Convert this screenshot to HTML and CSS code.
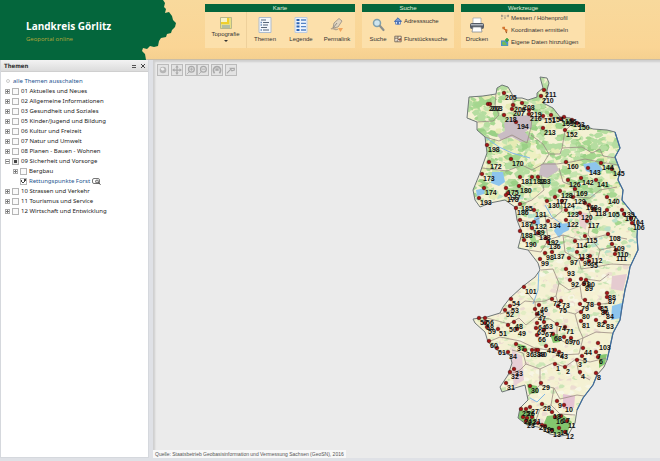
FILE: index.html
```html
<!DOCTYPE html>
<html lang="de">
<head>
    <meta charset="utf-8">
    <title>Landkreis Görlitz - Geoportal online</title>
    <link rel="stylesheet" href="styles.css">
</head>
<body>
    <header class="header">
        <svg class="header-shape" viewBox="0 0 180 60" aria-hidden="true">
            <path fill="#04663c" d="M0 0H163L165 3 164 7 166 9 165 13 169 12 172 16 173 20 176 23 175 27 172 30 171 33 167 34 166 37 161 38 159 41 158 46 154 47 150 46 147 49 143 48 142 51 145 54 146 60H0Z"/>
        </svg>
        <div class="brand">
            <h1>Landkreis Görlitz</h1>
            <p>Geoportal online</p>
        </div>
        <div class="ribbon">
            <section class="group group-karte">
                <h2>Karte</h2>
                <div class="group-body">
                    <button class="tool tool-menu">
                        <svg class="icon" viewBox="0 0 14 14"><path fill="#e7df83" stroke="#b9b78a" d="M1.5 1.5h11v11h-11z"/><path fill="#f7f3c8" d="M2 2h6v5H2z"/><path stroke="#f0cf2d" stroke-width="2" fill="none" d="M9 2v5H2"/><path fill="#b4bda3" d="M3 9h8v3H3z"/></svg>
                        <span>Topografie</span>
                        <i class="arrow"></i>
                    </button>
                    <button class="tool">
                        <svg class="icon" viewBox="0 0 16 16"><path fill="#f5f8fc" stroke="#aebccd" d="M2 .5h12v15H2z"/><path stroke="#59677a" stroke-width="1.2" d="M4 3h5M6 5.5h6M6 8h5M4 10.5h6M6 13h6"/><path stroke="#7090bd" stroke-width="1.5" d="M3.5 5.5h1.5M3.5 8h1.5M3.5 13h1.5"/></svg>
                        <span>Themen</span>
                    </button>
                    <button class="tool">
                        <svg class="icon" viewBox="0 0 16 16"><path fill="#eef4fc" stroke="#bdcce0" d="M2 .5h12v15H2z"/><path fill="#2c62b2" d="M3.500 2h3v2h-3zM3.500 5.300h3v2h-3zM3.500 8.600h3v2h-3zM3.500 12h3v2h-3z"/><path stroke="#5683c4" stroke-width="1.300" d="M8 3h5M8 6.300h5M8 9.600h5M8 13h5"/></svg>
                        <span>Legende</span>
                    </button>
                    <button class="tool">
                        <svg class="icon" viewBox="0 0 16 16"><path fill="#e1d5c0" stroke="#a69b8d" d="M4 11 5 6 10 1.500 13 4 9 10Z"/><path fill="none" stroke="#8f8c87" d="M4 11 8 6"/><path fill="none" stroke="#b6a48d" stroke-width="1.500" d="M2 12c3-2 4 2 7 0"/><path fill="#f2a45d" d="M9 11h5l-2.500 4z"/></svg>
                        <span>Permalink</span>
                    </button>
                </div>
            </section>
            <section class="group group-suche">
                <h2>Suche</h2>
                <div class="group-body">
                    <button class="tool">
                        <svg class="icon" viewBox="0 0 16 16"><circle cx="7" cy="6" r="3.500" fill="#cfe5ee" stroke="#7fa0ad" stroke-width="1.500"/><path stroke="#8a8f8d" stroke-width="2.200" stroke-linecap="round" d="M10 9l3.500 4"/></svg>
                        <span>Suche</span>
                    </button>
                    <div class="rows">
                        <button class="row-tool">
                            <svg class="small-icon" viewBox="0 0 10 10"><path fill="#e7eefb" stroke="#456fb7" d="M2 5v4h6V5"/><path fill="#7c9fd8" stroke="#315ca8" d="M.5 5.500 5 1l4.500 4.500z"/><path fill="#315ca8" d="M4 6h2v3H4z"/></svg>
                            Adresssuche
                        </button>
                        <button class="row-tool">
                            <svg class="small-icon" viewBox="0 0 10 10"><path fill="#f6eee0" stroke="#66584e" d="M1 1.500h8v7H1zM1 4h4V1.500M5 4v2l4-2M4 8.500V6"/><path fill="#a4543c" d="M6 5h3v2H6z"/></svg>
                            Flurstückssuche
                        </button>
                    </div>
                </div>
            </section>
            <section class="group group-werkzeuge">
                <h2>Werkzeuge</h2>
                <div class="group-body">
                    <button class="tool">
                        <svg class="icon" viewBox="0 0 16 16"><path fill="#fff" stroke="#9aa0a8" stroke-width=".7" d="M4 1h8v6H4z"/><rect x="1" y="6" width="14" height="6" rx="2" fill="#545b66"/><path fill="#aeb5be" d="M2 7h12v1.500H2z"/><path fill="#fff" stroke="#777e88" stroke-width=".7" d="M4 10h8l1 5H3z"/></svg>
                        <span>Drucken</span>
                    </button>
                    <div class="rows">
                        <button class="row-tool">
                            <svg class="small-icon" viewBox="0 0 10 10"><path fill="none" stroke="#8f8b80" stroke-dasharray="2 1" d="M1 2.500h8M1 2v5M9 2v3"/><path fill="#a39985" d="M0 1h2v2H0zM8 1h2v2H8zM4 4h2v2H4z"/></svg>
                            Messen / Höhenprofil
                        </button>
                        <button class="row-tool">
                            <svg class="small-icon" viewBox="0 0 10 10"><path stroke="#9a5a31" stroke-width="1.500" fill="none" d="M2 2l4 3 1 4"/><path fill="#d8762f" d="M2 1h3v3H2zM5 4h3v3H5z"/></svg>
                            Koordinaten ermitteln
                        </button>
                        <button class="row-tool">
                            <svg class="small-icon" viewBox="0 0 10 10"><path fill="#4a91cf" d="M0 3h9v7H0z"/><path fill="#75ba59" d="M1 5l3-1 2 2 2 3H2z"/><path stroke="#3da447" stroke-width="2" d="M7.500 0v5M5 2.500h5"/></svg>
                            Eigene Daten hinzufügen
                        </button>
                    </div>
                </div>
            </section>
        </div>
    </header>

    <main class="content">
        <aside class="panel">
            <div class="panel-title">
                <h2>Themen</h2>
                <button class="panel-button" aria-label="Minimieren"><svg viewBox="0 0 6 6"><path stroke="#555" d="M1 2.500h4M1 4.500h4"/></svg></button>
                <button class="panel-button" aria-label="Schließen"><svg viewBox="0 0 6 6"><path stroke="#444" d="M1 1l4 4M5 1 1 5"/></svg></button>
            </div>
            <div class="all-off"><i class="bullet"></i><a href="#">alle Themen ausschalten</a></div>
            <ul class="tree">
                <li><button class="expand" aria-label="Aufklappen"></button><input type="checkbox" id="t01"><label for="t01">01 Aktuelles und Neues</label></li>
                <li><button class="expand" aria-label="Aufklappen"></button><input type="checkbox" id="t02"><label for="t02">02 Allgemeine Informationen</label></li>
                <li><button class="expand" aria-label="Aufklappen"></button><input type="checkbox" id="t03"><label for="t03">03 Gesundheit und Soziales</label></li>
                <li><button class="expand" aria-label="Aufklappen"></button><input type="checkbox" id="t05"><label for="t05">05 Kinder/Jugend und Bildung</label></li>
                <li><button class="expand" aria-label="Aufklappen"></button><input type="checkbox" id="t06"><label for="t06">06 Kultur und Freizeit</label></li>
                <li><button class="expand" aria-label="Aufklappen"></button><input type="checkbox" id="t07"><label for="t07">07 Natur und Umwelt</label></li>
                <li><button class="expand" aria-label="Aufklappen"></button><input type="checkbox" id="t08"><label for="t08">08 Planen - Bauen - Wohnen</label></li>
                <li>
                    <button class="expand open" aria-label="Zuklappen"></button><input type="checkbox" id="t09" class="partial"><label for="t09">09 Sicherheit und Vorsorge</label>
                    <ul>
                        <li><button class="expand" aria-label="Aufklappen"></button><input type="checkbox" id="t09a"><label for="t09a">Bergbau</label></li>
                        <li class="leaf"><input type="checkbox" id="t09b" checked><label for="t09b" class="active">Rettungspunkte Forst</label><svg class="zoom-icon" viewBox="0 0 9 7"><rect x=".5" y=".5" width="7" height="5" rx="1.500" fill="#fff" stroke="#777"/><circle cx="5" cy="3.500" r="1.500" fill="#ddd" stroke="#555" stroke-width=".8"/><path stroke="#333" d="M6 4.500l2.500 2"/></svg></li>
                    </ul>
                </li>
                <li><button class="expand" aria-label="Aufklappen"></button><input type="checkbox" id="t10"><label for="t10">10 Strassen und Verkehr</label></li>
                <li><button class="expand" aria-label="Aufklappen"></button><input type="checkbox" id="t11"><label for="t11">11 Tourismus und Service</label></li>
                <li><button class="expand" aria-label="Aufklappen"></button><input type="checkbox" id="t12"><label for="t12">12 Wirtschaft und Entwicklung</label></li>
            </ul>
        </aside>

        <section class="map-area">
            <div class="map-tools">
                <button aria-label="Gesamtansicht"><svg viewBox="0 0 12 12"><circle cx="6" cy="6" r="4" fill="#b5b5b5"/><path fill="#eee" d="M3 4l3-1 2 2-2 2-2-1z"/></svg></button>
                <button class="gap" aria-label="Verschieben"><svg viewBox="0 0 12 12"><path stroke="#aaa" stroke-width="1.500" d="M6 2v8M2 6h8"/><path fill="#aaa" d="M6 0l2 3H4zM6 12l2-3H4zM0 6l3-2v4zM12 6 9 4v4z"/></svg></button>
                <button aria-label="Vergrößern"><svg viewBox="0 0 12 12"><circle cx="6.500" cy="5" r="3.500" fill="#ddd" stroke="#aaa" stroke-width="1.500"/><path stroke="#aaa" d="M6.500 3v4M4.500 5h4M4 8l-3 3"/></svg></button>
                <button class="gap" aria-label="Verkleinern"><svg viewBox="0 0 12 12"><circle cx="6.500" cy="5" r="3.500" fill="#ddd" stroke="#aaa" stroke-width="1.500"/><path stroke="#aaa" d="M4.500 5h4M4 8l-3 3"/></svg></button>
                <button class="gap" aria-label="Zurück"><svg viewBox="0 0 12 12"><path fill="none" stroke="#aaa" stroke-width="2" d="M3 10C0 5 3 2 6 2s6 3 3 8"/><path fill="#aaa" d="M4 4h4v3H4z"/></svg></button>
                <button aria-label="Messen"><svg viewBox="0 0 12 12"><path fill="none" stroke="#aaa" stroke-width="1.300" d="M1 10l5-5M5 4h5v2L7 7z"/></svg></button>
            </div>
            <svg class="map" id="map" viewBox="460 70 180 375" role="img" aria-label="Karte Landkreis Görlitz">
                <defs>
                    <clipPath id="land-clip">
                        <path id="land" d="M469 97 483 96 496 94 497 88 502 85 508 87 512 94 513 98 522 98 528 100 537 97 537 93 543 88 540 77 547 78 549 83 547 90 547 97 543 103 553 108 560 117 570 118 582 125 593 129 607 130 615 132 620 148 615 157 620 170 618 180 623 190 622 200 630 210 638 220 637 237 638 250 630 267 628 278 625 290 622 307 620 320 613 333 610 347 607 360 604 367 597 375 593 385 583 398 577 410 575 423 568 435 560 436 550 434 538 427 527 425 518 418 520 408 528 400 525 385 515 388 502 392 500 387 508 375 512 363 510 355 497 350 488 342 485 332 475 323 473 319 487 317 500 313 503 307 510 298 522 287 535 277 540 270 538 263 528 250 518 248 522 233 517 220 515 207 505 200 490 203 480 207 475 200 473 190 480 173 482 167 487 153 485 137 477 130 477 122 467 118Z"/>
                    </clipPath>
                </defs>
                <g clip-path="url(#land-clip)">
                    <path fill="#f4f1d3" d="M460 70h180v375H460z"/>
                    <g id="terrain"></g>
                    <g fill="#c9bcc4">
                        <path d="M504 123 515 116 530 115 532 127 525 132 531 140 521 142 512 137 501 140 497 135 505 131z"/>
                        <path d="M541 164 555 163 559 170 547 178 539 175z"/>
                        <path fill="#e5cbd0" d="M612 276 627 274 623 291 611 289z"/>
                        <path fill="#e7cfd6" d="M512 350 522 356 524 380 514 386 512 370z"/>
                        <path fill="#e4c3d2" d="M563 394 575 396 574 408 563 409z"/>
                        <path fill="#ead0d0" d="M578 212 587 213 586 230 580 226z"/>
                    </g>
                    <g fill="#8ec5ed">
                        <path d="M492 172 503 172 505 182 499 186 491 183z"/>
                        <path d="M583 164 596 162 603 170 594 174 586 171z"/>
                        <path d="M557 224 570 223 569 230 563 233 559 238 554 231z"/>
                        <path d="M612 306 622 303 621 318 611 320z"/>
                        <path d="M476 190 485 188 484 194 477 196z"/>
                        <path d="M534 218l5-2 1 8-5 2z"/>
                    </g>
                    <g fill="#83c66e">
                        <path d="M519 410 533 411 536 424 527 425 518 418z"/>
                        <path d="M547 416 562 414 572 422 567 433 555 434 543 426z"/>
                        <path d="M527 384 537 386 538 393 529 394z"/>
                        <path d="M599 355 607 354 605 364 599 368z"/>
                        <path d="M516 343 526 346 528 352 520 350z"/>
                        <path d="M550 334 558 334 560 342 553 343z"/>
                    </g>
                    <g fill="none" stroke="#80b8e7" stroke-width="1">
                        <path d="M485 137 499 147 512 153 530 158"/>
                        <path d="M539 266 538 290 533 304"/>
                        <path d="M530 398 537 402 545 394"/>
                        <path d="M545 205 552 217 562 224"/>
                    </g>
                    <g class="district">
                        <path d="M496 94 495 105 499 115 493 121 477 122M513 98 513 106 529 110 532 118 543 119 560 117"/>
                        <path d="M485 137 499 141 512 135 527 143 531 127 532 118M531 135 543 144 549 154 560 154 562 148"/>
                        <path d="M562 148 565 131 574 122M562 148 582 147 592 153 600 149 603 156 616 158M549 154 543 164 532 170 522 165 507 171 482 168"/>
                        <path d="M543 164 557 164 571 162 585 159 600 162 618 165M541 175 544 190 532 200 515 207M559 168 563 182 573 186 575 197 590 198 600 190 617 187"/>
                        <path d="M517 220 532 222 545 215 552 219 562 211 561 199M532 222 535 235 548 240 563 235 580 240 590 239 605 235 627 239M545 215 548 240 541 252 528 250"/>
                        <path d="M585 200 591 216 588 235 600 250 613 247 631 255M563 235 565 252 579 260 581 269 595 267 611 264 631 265M600 250 596 267"/>
                        <path d="M541 270 553 269 559 283 569 290 580 286 586 279 600 281 609 274M559 283 556 296 545 301 535 302 527 292M580 286 582 299 590 305 612 303"/>
                        <path d="M500 314 513 310 525 301 535 302 536 317 526 325 519 318 509 324 487 318M536 317 550 319 557 324 557 338 568 344 583 338 596 332 612 333"/>
                        <path d="M556 296 560 310 575 314 590 305M575 314 579 329 583 338 579 354 560 355 548 350 535 348 520 341 500 337 488 342"/>
                        <path d="M512 350 523 353 526 364 540 369 553 363 565 367 576 359 590 362 606 358M540 369 540 385 527 397M576 359 579 374 590 380"/>
                        <path d="M540 385 554 388 560 399 577 395 584 396M554 388 551 405 560 414 575 415M551 405 540 409 535 423M508 375 520 370 526 364"/>
                    </g>
                </g>
                <path class="border" d="M469 97 483 96 496 94 497 88 502 85 508 87 512 94 513 98 522 98 528 100 537 97 537 93 543 88 540 77 547 78 549 83 547 90 547 97 543 103 553 108 560 117 570 118 582 125 593 129 607 130 615 132 620 148 615 157 620 170 618 180 623 190 622 200 630 210 638 220 637 237 638 250 630 267 628 278 625 290 622 307 620 320 613 333 610 347 607 360 604 367 597 375 593 385 583 398 577 410 575 423 568 435 560 436 550 434 538 427 527 425 518 418 520 408 528 400 525 385 515 388 502 392 500 387 508 375 512 363 510 355 497 350 488 342 485 332 475 323 473 319 487 317 500 313 503 307 510 298 522 287 535 277 540 270 538 263 528 250 518 248 522 233 517 220 515 207 505 200 490 203 480 207 475 200 473 190 480 173 482 167 487 153 485 137 477 130 477 122 467 118Z"/>
                <path class="river" d="M615 132 620 148 615 157 620 170 618 180 623 190 622 200 630 210 638 220 637 237 638 250 630 267 628 278 625 290 622 307 620 320 613 333 610 347 607 360M597 375 593 385 583 398 577 410"/>
                <g id="points"></g>
            </svg>
            <p class="source">Quelle: Staatsbetrieb Geobasisinformation und Vermessung Sachsen (GeoSN), 2016</p>
        </section>
    </main>
    <script src="map.js"></script>
</body>
</html>
```
FILE: styles.css
```css
* {
    box-sizing: border-box;
}
body {
    font-family: "Liberation Sans", Arial, sans-serif;
    font-size: 6px;
    line-height: 8px;
    color: #333;
    display: flex;
    flex-direction: column;
    min-height: 100vh;
    margin: 0;
    background-color: #dfe1e6;
}
h1, h2, p, ul {
    margin: 0;
    padding: 0;
}
button {
    font: inherit;
    color: inherit;
    background: none;
    border: 0;
    padding: 0;
    cursor: pointer;
}
svg {
    display: block;
}

/* header */
.header {
    position: relative;
    display: flex;
    height: 60px;
    background: linear-gradient(#f8d99c, #fad595 80%, #f5d08f);
    border-bottom: 1px solid #c9bda6;
}
.header-shape {
    position: absolute;
    top: 0;
    left: 0;
    width: 180px;
    height: 60px;
}
.brand {
    position: relative;
    flex: 0 0 205px;
    padding: 19px 0 0 26px;
    font-family: "Open Sans", sans-serif;
}
.brand h1 {
    font-size: 10px;
    line-height: 14px;
    color: #fff;
}
.brand p {
    font-size: 6px;
    line-height: 12px;
    color: #b5a93a;
}
.ribbon {
    display: flex;
    align-items: flex-start;
    gap: 7px;
    padding-top: 4px;
}
.group {
    background: #fce0ab;
}
.group-karte {
    width: 150px;
}
.group-suche {
    width: 92px;
}
.group-werkzeuge {
    width: 124px;
}
.group h2 {
    font-size: 6px;
    line-height: 8px;
    font-weight: normal;
    text-align: center;
    color: #e6efdc;
    background: #04663c;
}
.group-body {
    display: flex;
    height: 36px;
}
.tool {
    display: flex;
    flex: 1;
    flex-direction: column;
    align-items: center;
    gap: 2px;
    padding-top: 5px;
}
.group-suche .tool,
.group-werkzeuge .tool {
    flex: 0 0 32px;
}
.tool-menu {
    flex: 0 0 42px;
    gap: 0;
    padding-top: 4px;
    border-right: 1px solid #eed09b;
}
.icon {
    width: 16px;
    height: 16px;
}
.tool-menu .icon {
    width: 14px;
    height: 14px;
}
.arrow {
    margin-top: 2px;
    border: 2px solid transparent;
    border-top-color: #333;
}
.rows {
    display: flex;
    flex: 1;
    flex-direction: column;
    justify-content: space-around;
    white-space: nowrap;
}
.group-werkzeuge .rows {
    padding-left: 8px;
}
.row-tool {
    display: flex;
    align-items: center;
    gap: 2px;
}
.small-icon {
    width: 8px;
    height: 8px;
}

/* theme panel */
.content {
    display: flex;
    flex: 1;
    gap: 4px;
    margin-bottom: 3px;
}
.panel {
    width: 149px;
    background: #fff;
    border: 1px solid #d5d8dd;
    border-top: 0;
}
.panel-title {
    display: flex;
    align-items: center;
    gap: 3px;
    height: 12px;
    padding: 0 2px 0 3px;
    background: linear-gradient(#f3f3f3, #dcdcdc);
    border-bottom: 1px solid #cfcfcf;
}
.panel-title h2 {
    flex: 1;
    font-size: 6px;
    font-family: "DejaVu Sans Condensed", "DejaVu Sans", sans-serif;
}
.panel-button svg {
    width: 6px;
    height: 6px;
}
.all-off,
.tree {
    font-family: "Noto Sans", Tahoma, sans-serif;
}
.all-off {
    display: flex;
    align-items: center;
    gap: 3px;
    height: 10px;
    margin-top: 4px;
    padding-left: 5px;
}
.all-off a,
.active {
    color: #24558f;
    text-decoration: none;
}
.bullet {
    width: 4px;
    height: 4px;
    border: 1px solid #ccc;
    border-radius: 50%;
}
.tree {
    padding-left: 4px;
}
.tree ul {
    flex-basis: 100%;
    padding-left: 8px;
}
.tree li {
    display: flex;
    flex-wrap: wrap;
    align-items: center;
    line-height: 10px;
    list-style: none;
    white-space: nowrap;
    color: #222;
}
.tree .leaf {
    padding-left: 7px;
}
.expand {
    width: 5px;
    height: 5px;
    margin-right: 2px;
    border: 1px solid #aaa;
    background: linear-gradient(#777, #777) center / 3px 1px no-repeat, linear-gradient(#777, #777) center / 1px 3px no-repeat;
}
.expand.open {
    background: linear-gradient(#777, #777) center / 3px 1px no-repeat;
}
.tree input {
    appearance: none;
    width: 7px;
    height: 7px;
    margin: 0 2px 0 0;
    border: 1px solid #b5b5b5;
    background: #fafafa;
}
.tree input.partial {
    background: #444;
    border-color: #aaa;
    box-shadow: inset 0 0 0 1px #eee;
}
.tree input:checked {
    background: conic-gradient(from 20deg at 40% 80%, #444 30deg, #fff 30deg 280deg, #444 280deg 310deg, #fff 310deg);
}
.active {
    margin-right: 2px;
}
.zoom-icon {
    width: 9px;
    height: 7px;
}

/* map */
.map-area {
    position: relative;
    display: flex;
    flex: 1;
    justify-content: flex-end;
    align-items: flex-start;
    padding: 10px 20px 0 0;
    background: #ebebeb;
    box-shadow: inset 2px 2px 2px #cfcfcf;
}
.map-tools {
    position: absolute;
    top: 4px;
    left: 4px;
    display: flex;
}
.map-tools button {
    width: 12px;
    height: 12px;
    border: 1px solid #bbb;
    background: #e3e3e3;
}
.map-tools .gap,
.map-tools button:first-child {
    margin-right: 2px;
}
.map-tools svg {
    width: 10px;
    height: 10px;
}
.map {
    width: 180px;
    height: 375px;
    overflow: visible;
}
.district {
    fill: none;
    stroke: #9b8c83;
    stroke-width: 0.8;
}
.border {
    fill: none;
    stroke: #6f7778;
    stroke-width: 1;
}
.river {
    fill: none;
    stroke: #3e6d9f;
    stroke-width: 1.2;
}
.point {
    fill: #a51414;
    stroke: #4d1010;
    stroke-width: 0.6;
}
.point-label {
    font-family: "Liberation Sans Narrow", "Liberation Sans", sans-serif;
    font-size: 7px;
    font-weight: bold;
    fill: #111;
}
.source {
    position: absolute;
    left: 0;
    bottom: 0;
    padding: 0 2px;
    font-size: 5px;
    background: #f8f8f8;
    color: #555;
}
```
FILE: map.js
```js
// Rettungspunkte: x, y, Nummer
const points = [
    [504,93,205],[488,104,202],[490,104,203],[513,105,206],[512,109,207],[522,103,208],[529,110,219],[529,114,216],[504,115,218],[516,122,194],
    [544,90,211],[541,96,210],[543,116,151],[551,115,154],[561,119,155],[564,117,156],[572,120,153],[577,123,150],[543,128,213],[565,130,152],
    [487,145,198],[489,162,172],[511,159,170],[566,162,160],[588,168,143],[601,163,144],[612,169,145],[482,174,173],[520,177,181],[532,177,182],
    [538,177,183],[484,188,174],[479,198,193],[519,186,180],[506,188,175],[508,193,177],[506,195,178],[568,180,126],[581,178,142],[596,180,141],
    [560,191,128],[575,189,169],[573,197,129],[607,197,140],[547,201,130],[555,197,127],[562,201,124],[520,204,185],[516,208,186],[534,210,131],
    [566,210,123],[585,203,168],[589,205,119],[594,209,118],[607,210,105],[580,213,120],[622,210,139],[624,214,107],[631,218,104],[632,223,106],
    [520,220,187],[534,222,132],[548,221,134],[566,220,122],[587,221,117],[532,228,189],[520,231,188],[538,233,133],[524,240,190],[546,238,192],
    [548,242,136],[552,252,137],[545,253,98],[540,259,99],[569,258,97],[575,241,114],[585,236,115],[577,252,113],[582,259,96],[590,256,112],
    [589,261,95],[608,234,108],[612,244,109],[616,250,110],[615,254,111],[566,269,93],[570,280,92],[581,279,91],[586,280,90],[584,284,89],
    [524,287,101],[607,293,88],[607,297,87],[511,299,54],[510,306,53],[505,310,52],[539,305,46],[535,309,45],[537,314,47],[552,299,72],
    [561,301,73],[558,306,75],[585,300,78],[580,304,79],[581,312,80],[599,304,85],[600,308,86],[605,312,84],[596,320,82],[605,322,83],
    [581,321,81],[479,318,57],[485,318,56],[485,323,58],[487,327,59],[498,329,51],[508,325,50],[514,322,48],[517,329,49],[537,323,64],
    [544,322,63],[536,328,65],[544,330,67],[537,335,66],[557,324,74],[565,327,71],[553,334,68],[564,337,69],[571,338,70],[489,341,60],
    [497,348,61],[508,352,34],[516,344,37],[525,350,36],[532,350,38],[536,350,39],[538,350,40],[546,346,41],[555,350,42],[559,352,43],
    [583,348,44],[598,343,103],[582,356,5],[596,352,7],[577,360,3],[598,357,6],[555,364,1],[565,367,2],[580,372,4],[596,373,8],
    [514,369,33],[510,372,32],[506,383,31],[530,386,30],[541,383,29],[557,401,9],[564,405,10],[542,404,28],[521,409,25],[526,409,26],
    [530,407,27],[523,417,24],[527,418,22],[532,417,21],[526,421,23],[538,423,20],[552,412,18],[555,417,16],[561,416,17],[567,421,11],
    [542,425,19],[545,426,15],[559,428,14],[552,430,13],[565,432,12]
];

const ns = 'http://www.w3.org/2000/svg';

function add(parent, name, attrs) {
    const el = document.createElementNS(ns, name);
    for (const key in attrs) {
        el.setAttribute(key, attrs[key]);
    }
    parent.appendChild(el);
    return el;
}

// fixed seed, so the terrain is the same on every load
let seed = 7;
function random() {
    seed = (seed * 16807) % 2147483647;
    return seed / 2147483647;
}

// forest in the north, fields and villages in the south
const north = ['#a4d68e', '#a8d892', '#b5dda0', '#b5dda0', '#c5e4ae', '#9ad086', '#eef0c2', '#e6ebb5'];
const middle = ['#a4d68e', '#c5e4ae', '#cfe6bb', '#f4f2cf', '#f6f3d7', '#efe2c8', '#b8e0c8'];
const south = ['#f7f4d6', '#f4f0cf', '#f4f1d8', '#e2edc4', '#cbe5b6', '#ecdcd1', '#f6f0d4', '#f7f6e4'];

function drawTerrain() {
    const terrain = document.getElementById('terrain');
    for (let i = 0; i < 3400; i++) {
        const x = 462 + random() * 178;
        const y = 74 + random() * 364;
        const colors = y < 195 ? north : y < 255 ? middle : south;
        const size = 1.5 + random() * (y < 195 ? 5 : 3);
        let shape = '';
        for (let k = 0; k < 6; k++) {
            const r = size * (0.5 + random() * 0.7);
            shape += (x + r * Math.cos(k * 1.05)).toFixed(1) + ',' + (y + r * 0.7 * Math.sin(k * 1.05)).toFixed(1) + ' ';
        }
        add(terrain, 'polygon', { points: shape, fill: colors[Math.floor(random() * colors.length)] });
    }
}

function drawPoints() {
    const layer = document.getElementById('points');
    for (const [x, y] of points) {
        add(layer, 'circle', { cx: x, cy: y, r: 1.8, class: 'point' });
    }
    for (const [x, y, number] of points) {
        add(layer, 'text', { x: x + 1, y: y + 7, class: 'point-label' }).textContent = number;
    }
}

drawTerrain();
drawPoints();
```
